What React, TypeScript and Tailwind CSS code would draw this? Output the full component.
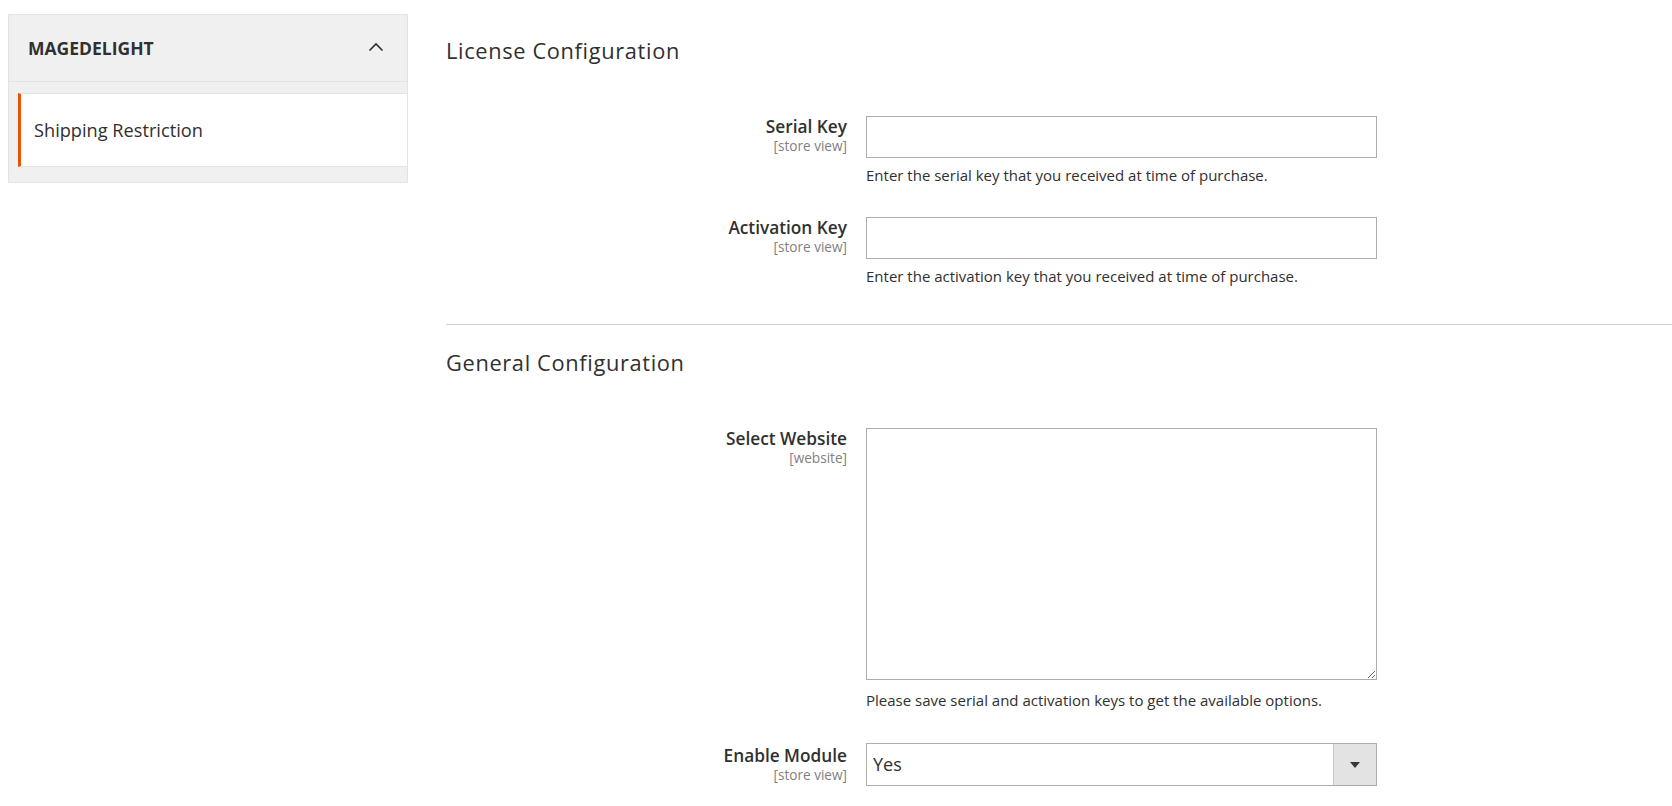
import React from 'react';

const fieldLabel = (title: string, scope: string) => (
  <div className="flex flex-col items-end text-right">
    <span className="text-[17.25px] leading-[22px] font-semibold text-[#303030]">{title}</span>
    <span className="text-[13.6px] leading-[16px] text-[#808080]">{scope}</span>
  </div>
);

const Note: React.FC<{ children: React.ReactNode; gap?: string }> = ({ children, gap = 'mt-[7px]' }) => (
  <p className={`${gap} text-[15px] leading-[20px] text-[#303030]`}>{children}</p>
);

const Sidebar: React.FC = () => (
  <aside className="ml-2 mt-[14px] w-[400px] self-start border border-[#e3e3e3] bg-[#f0f0f0]">
    <div className="flex h-[67px] items-center justify-between border-b border-[#e3e3e3] pl-[19px] pr-[23px]">
      <span className="text-[17.5px] font-bold text-[#303030]">MAGEDELIGHT</span>
      <svg width="16" height="10" viewBox="0 0 16 10" fill="none" className="mb-[2px]">
        <path d="M1.5 8.5 L8 2 L14.5 8.5" stroke="#303030" strokeWidth="1.6" />
      </svg>
    </div>
    <div className="mt-[11px] mb-[15px] ml-[9px] flex h-[74px] items-center border-y border-[#e3e3e3] border-l-[3px] border-l-[#eb5202] bg-white pl-[13px] pt-[2px]">
      <span className="text-[18.2px] text-[#303030]">Shipping Restriction</span>
    </div>
  </aside>
);

export default function App() {
  return (
    <div className="flex min-h-screen bg-white font-['Open_Sans',sans-serif] text-[#303030]">
      <Sidebar />
      <main className="ml-[38px] flex-1 pt-[36px]">
        <h2 className="text-[21.8px] leading-[30px] tracking-[0.03em] text-[#303030]">License Configuration</h2>

        <div className="mt-[50px] grid grid-cols-[401px_511px] gap-x-[19px]">
          {fieldLabel('Serial Key', '[store view]')}
          <div>
            <input className="block h-[42px] w-full border border-[#adadad] bg-white outline-none" />
            <Note>Enter the serial key that you received at time of purchase.</Note>
          </div>
        </div>

        <div className="mt-[32px] grid grid-cols-[401px_511px] gap-x-[19px]">
          {fieldLabel('Activation Key', '[store view]')}
          <div>
            <input className="block h-[42px] w-full border border-[#adadad] bg-white outline-none" />
            <Note>Enter the activation key that you received at time of purchase.</Note>
          </div>
        </div>

        <div className="mt-[38px] border-t border-[#d1d1d1]" />

        <h2 className="mt-[23px] text-[21.8px] leading-[30px] tracking-[0.03em] text-[#303030]">General Configuration</h2>

        <div className="mt-[50px] grid grid-cols-[401px_511px] gap-x-[19px]">
          {fieldLabel('Select Website', '[website]')}
          <div>
            <textarea className="block h-[252px] w-full border border-[#adadad] bg-white outline-none" />
            <Note gap="mt-[10px]">Please save serial and activation keys to get the available options.</Note>
          </div>
        </div>

        <div className="mt-[33px] grid grid-cols-[401px_511px] gap-x-[19px]">
          <div className="pt-[2px]">{fieldLabel('Enable Module', '[store view]')}</div>
          <div className="flex h-[43px] w-full items-stretch border border-[#adadad] bg-white">
            <span className="flex flex-1 items-center pl-[6px] text-[18px] text-[#303030]">Yes</span>
            <span className="flex w-[43px] items-center justify-center border-l border-[#c8c8c8] bg-[#e3e3e3]">
              <svg width="10" height="6" viewBox="0 0 10 6">
                <path d="M0 0 H10 L5 6 Z" fill="#41362f" />
              </svg>
            </span>
          </div>
        </div>
      </main>
    </div>
  );
}
